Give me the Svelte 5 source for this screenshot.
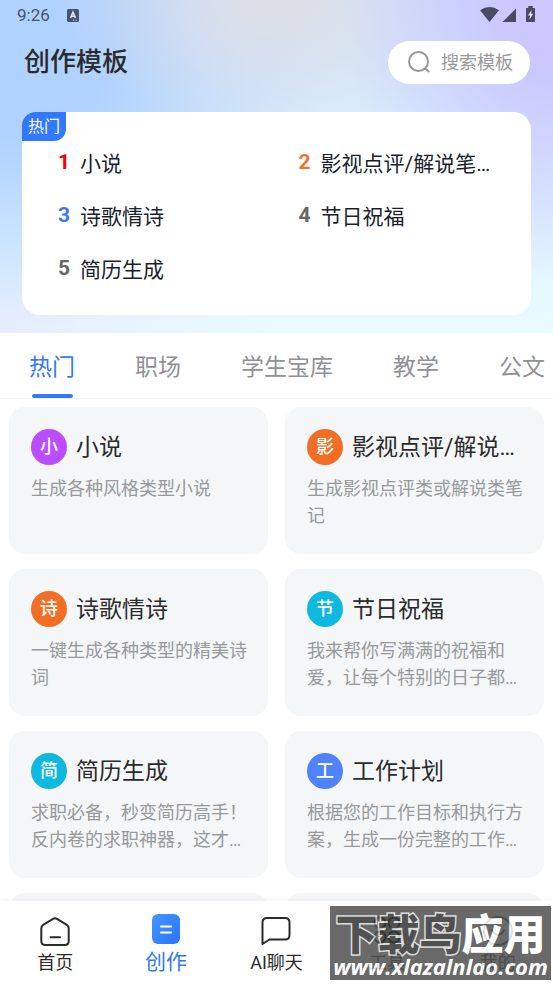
<script lang="ts">
    type Template = { title: string; desc: string; color: string };

    const hotList = [
        { rank: 1, name: '小说', color: '#f5000f' },
        { rank: 2, name: '影视点评/解说笔…', color: '#f0712c' },
        { rank: 3, name: '诗歌情诗', color: '#3b78f0' },
        { rank: 4, name: '节日祝福', color: '#666666' },
        { rank: 5, name: '简历生成', color: '#666666' },
    ];

    const tabs = ['热门', '职场', '学生宝库', '教学', '公文'];

    const templates: Template[] = [
        { title: '小说', desc: '生成各种风格类型小说', color: '#b94dff' },
        { title: '影视点评/解说…', desc: '生成影视点评类或解说类笔记', color: '#f26d26' },
        { title: '诗歌情诗', desc: '一键生成各种类型的精美诗词', color: '#f26d26' },
        { title: '节日祝福', desc: '我来帮你写满满的祝福和爱，让每个特别的日子都…', color: '#0fb8de' },
        { title: '简历生成', desc: '求职必备，秒变简历高手！反内卷的求职神器，这才…', color: '#0fb8de' },
        { title: '工作计划', desc: '根据您的工作目标和执行方案，生成一份完整的工作…', color: '#4f82ff' },
    ];

    let activeTab = '热门';
    let activeNav = '创作';
</script>

<div class="app">
    <header class="hero">
        <div class="status">
            <span>9:26</span>
            <svg class="status-app" width="12" height="13" viewBox="0 0 12 13">
                <rect width="12" height="13" rx="1.5" fill="#45546b" />
                <path d="M3.5 9 L6 3.2 L8.5 9 M4.4 7.2 H7.6" fill="none" stroke="#dcebff" stroke-width="1.5" />
                <path d="M6 11.2 H7.2 M8.6 11.2 H9.8" stroke="#dcebff" stroke-width="1" />
            </svg>
            <svg class="status-right" width="56" height="18" viewBox="0 0 56 18" fill="#484b63">
                <path d="M0 4.2 Q9.5 -2.2 19 4.2 L9.5 16 Z" />
                <path d="M36 2.5 V16 H22.5 Z" />
                <path d="M48.300 0 H52.700 V2 H55 V16 H46 V2 H48.300 Z" />
                <path d="M51.600 4 L48 9.400 H50.200 L49.400 13.800 L53.200 7.800 H51 Z" fill="#e4e2ff" />
            </svg>
        </div>

        <div class="title-row">
            <h1>创作模板</h1>
            <label class="search">
                <svg width="24" height="24" viewBox="0 0 24 24" fill="none" stroke="#999" stroke-width="2" stroke-linecap="round">
                    <circle cx="11.500" cy="11.500" r="9.500" />
                    <path d="M18.500 18.500 L21.500 21.500" />
                </svg>
                <input type="text" placeholder="搜索模板" aria-label="搜索模板" />
            </label>
        </div>

        <section class="hot">
            <span class="hot-tag">热门</span>
            <ol>
                {#each hotList as item}
                    <li>
                        <b style="color: {item.color}">{item.rank}</b>
                        <span>{item.name}</span>
                    </li>
                {/each}
            </ol>
        </section>
    </header>

    <nav class="tabs">
        {#each tabs as tab}
            <button class:active={tab === activeTab} on:click={() => (activeTab = tab)}>{tab}</button>
        {/each}
    </nav>

    <main class="cards">
        {#each templates as item}
            <article class="card">
                <div class="card-head">
                    <span class="badge" style="background: {item.color}">{item.title[0]}</span>
                    <h2>{item.title}</h2>
                </div>
                <p>{item.desc}</p>
            </article>
        {/each}
        <article class="card"></article>
        <article class="card"></article>
    </main>

    <footer class="bottom">
        <button class:active={activeNav === '首页'} on:click={() => (activeNav = '首页')}>
            <svg width="32" height="32" viewBox="0 -1 32 32" fill="none" stroke="#2b2b2b" stroke-width="2" stroke-linecap="round" stroke-linejoin="round">
                <path d="M14 3.800 L4.600 9.600 Q2.300 11 2.300 13.500 V26 Q2.300 30 6.300 30 H25.700 Q29.700 30 29.700 26 V13.500 Q29.700 11 27.400 9.600 L18 3.800 Q16 2.600 14 3.800 Z" />
                <path d="M11.500 22.200 H21" />
            </svg>
            <span>首页</span>
        </button>
        <button class:active={activeNav === '创作'} on:click={() => (activeNav = '创作')}>
            <svg width="32" height="32" viewBox="0 0 32 32">
                <defs>
                    <linearGradient id="create" x1="0" y1="0" x2="1" y2="1">
                        <stop offset="0" stop-color="#3e97ff" />
                        <stop offset="1" stop-color="#2f74ff" />
                    </linearGradient>
                </defs>
                <rect x="2" y="0" width="28" height="30" rx="6" fill="url(#create)" />
                <path d="M11 12.500 H21 M11 18.500 H21" stroke="#fff" stroke-width="2.200" stroke-linecap="round" />
            </svg>
            <span>创作</span>
        </button>
        <button class:active={activeNav === 'AI聊天'} on:click={() => (activeNav = 'AI聊天')}>
            <svg width="32" height="32" viewBox="0 -1 32 32" fill="none" stroke="#2b2b2b" stroke-width="2" stroke-linejoin="round">
                <path d="M2.500 29 V7.500 Q2.500 3 7 3 H25 Q29.500 3 29.500 7.500 V20 Q29.500 24.500 25 24.500 H9.500 Z" />
            </svg>
            <span>AI聊天</span>
        </button>
        <button class:active={activeNav === '工具'} on:click={() => (activeNav = '工具')}>
            <svg width="32" height="32" viewBox="0 -1 32 32" fill="none" stroke="#2b2b2b" stroke-width="2">
                <circle cx="9" cy="8" r="5.500" />
                <circle cx="23" cy="8" r="5.500" />
                <circle cx="9" cy="22" r="5.500" />
                <circle cx="23" cy="22" r="5.500" />
            </svg>
            <span>工具</span>
        </button>
        <button class:active={activeNav === '我的'} on:click={() => (activeNav = '我的')}>
            <svg width="32" height="32" viewBox="0 -1 32 32" fill="none" stroke="#2b2b2b" stroke-width="2" stroke-linecap="round">
                <circle cx="16" cy="16" r="14" />
                <path d="M10 15 Q16 25 22 15" />
            </svg>
            <span>我的</span>
        </button>
    </footer>

    <div class="watermark">
        <div class="mark-name"><span>下载鸟</span>应用</div>
        <div class="mark-url">www.xlazalnlao.com</div>
    </div>
</div>

<style>
    :global(body) {
        background: #fff;
    }

    .app {
        display: flex;
        flex-direction: column;
        height: 100vh;
        position: relative;
        overflow: hidden;
        font-family: Roboto, 'Noto Sans CJK SC', sans-serif;
        color: #2b2b2b;
    }

    button {
        border: 0;
        padding: 0;
        background: none;
        font-family: inherit;
        cursor: pointer;
    }

    .hero {
        flex: none;
        padding: 0 22px 18px;
        background:
            radial-gradient(ellipse 38% 85% at 100% 0%, #cac8ff 25%, rgba(202, 200, 255, 0) 100%),
            radial-gradient(ellipse 40% 42% at 50% 0%, #dddfe8 10%, rgba(221, 223, 232, 0) 100%),
            radial-gradient(ellipse 60% 90% at 0% 10%, #b0d2ff 35%, rgba(176, 210, 255, 0) 100%),
            radial-gradient(ellipse 50% 30% at 0% 100%, #e8edff, rgba(232, 237, 255, 0) 100%),
            linear-gradient(#cfe6fd, #e9fbff);
    }

    .status {
        display: flex;
        align-items: center;
        height: 30px;
        margin: 0 -5px;
        font-size: 17px;
        color: #45546b;
    }

    .status-app {
        margin-left: 17px;
    }

    .status-right {
        margin-left: auto;
    }

    .title-row {
        display: flex;
        align-items: center;
        justify-content: space-between;
        height: 64px;
        padding: 0 1px 0 2px;
    }

    h1 {
        margin: 0;
        font-size: 26px;
        font-weight: 500;
        line-height: 38px;
    }

    .search {
        display: flex;
        align-items: center;
        gap: 10px;
        box-sizing: border-box;
        width: 142px;
        height: 43px;
        padding: 0 16px 0 19px;
        border-radius: 22px;
        background: #fff;
    }

    .search svg {
        flex: none;
    }

    .search input {
        flex: 1;
        min-width: 0;
        border: 0;
        padding: 0;
        outline: none;
        background: none;
        font-family: inherit;
        font-size: 18px;
    }

    .search input::placeholder {
        color: #999;
    }

    .hot {
        position: relative;
        margin-top: 18px;
        padding: 23px 14px 21px;
        border-radius: 18px;
        background: #fff;
    }

    .hot-tag {
        position: absolute;
        top: 0;
        left: 0;
        width: 44px;
        line-height: 29px;
        border-radius: 14px 0 12px 0;
        background: #3279ff;
        color: #fff;
        font-size: 16px;
        text-align: center;
    }

    .hot ol {
        display: grid;
        grid-template-columns: 1fr 1fr;
        margin: 0;
        padding: 0;
        list-style: none;
    }

    .hot li {
        display: flex;
        align-items: center;
        gap: 10px;
        min-width: 0;
        height: 53px;
        padding: 0 22px;
        font-size: 21px;
        color: #1a1f2e;
    }

    .hot b {
        flex: none;
        width: 12px;
    }

    .hot li span,
    h2 {
        white-space: nowrap;
        overflow: hidden;
        text-overflow: ellipsis;
    }

    .tabs {
        display: flex;
        flex: none;
        gap: 60px;
        height: 65px;
        padding: 0 29px;
        border-bottom: 1px solid #f0f1f3;
        overflow: hidden;
    }

    .tabs button {
        position: relative;
        flex: none;
        padding-bottom: 2px;
        font-size: 23px;
        color: #8f9194;
    }

    .tabs .active {
        color: #3279ff;
    }

    .tabs .active::after {
        content: '';
        position: absolute;
        left: 3px;
        right: 2px;
        bottom: 0;
        height: 4px;
        border-radius: 2px;
        background: #3279ff;
    }

    .cards {
        flex: 1;
        display: grid;
        grid-template-columns: 1fr 1fr;
        grid-auto-rows: 147px;
        gap: 15px 17px;
        padding: 8px 9px;
        min-height: 0;
        overflow: hidden;
    }

    .card {
        min-width: 0;
        box-sizing: border-box;
        padding: 22px 20px 0 22px;
        border-radius: 16px;
        background: #f4f6f8;
    }

    .card-head {
        display: flex;
        align-items: flex-start;
        gap: 9px;
        height: 36px;
    }

    .badge {
        flex: none;
        width: 36px;
        line-height: 36px;
        border-radius: 50%;
        color: #fff;
        font-size: 18px;
        font-weight: 500;
        text-align: center;
    }

    h2 {
        margin: 0;
        font-size: 23px;
        font-weight: 400;
        line-height: 38px;
    }

    .card p {
        margin: 10px 0 0;
        font-size: 18px;
        line-height: 27px;
        color: #97999c;
    }

    .bottom {
        display: grid;
        grid-template-columns: repeat(5, 1fr);
        flex: none;
        height: 83px;
        background: #fff;
        box-shadow: 0 -1px 6px rgba(0, 0, 0, 0.05);
        position: relative;
    }

    .bottom button {
        display: flex;
        flex-direction: column;
        align-items: center;
        padding-top: 13px;
        font-size: 18px;
        color: #2b2b2b;
    }

    .bottom span {
        line-height: 33px;
    }

    .bottom .active {
        font-size: 21px;
        color: #3279ff;
    }

    .watermark {
        position: absolute;
        right: 2px;
        bottom: 4px;
        width: 221px;
        height: 74px;
        background: #505050;
        opacity: 0.85;
        color: #fff;
        text-align: center;
        white-space: nowrap;
    }

    .mark-name {
        font-size: 42px;
        font-weight: 900;
        line-height: 60px;
    }

    .mark-name span {
        color: #333;
        -webkit-text-stroke: 3px #d8d8d8;
        paint-order: stroke fill;
    }

    .mark-url {
        margin-top: -10px;
        font-family: 'Open Sans', sans-serif;
        font-size: 22px;
        font-style: italic;
        font-weight: 700;
        line-height: 20px;
    }
</style>
